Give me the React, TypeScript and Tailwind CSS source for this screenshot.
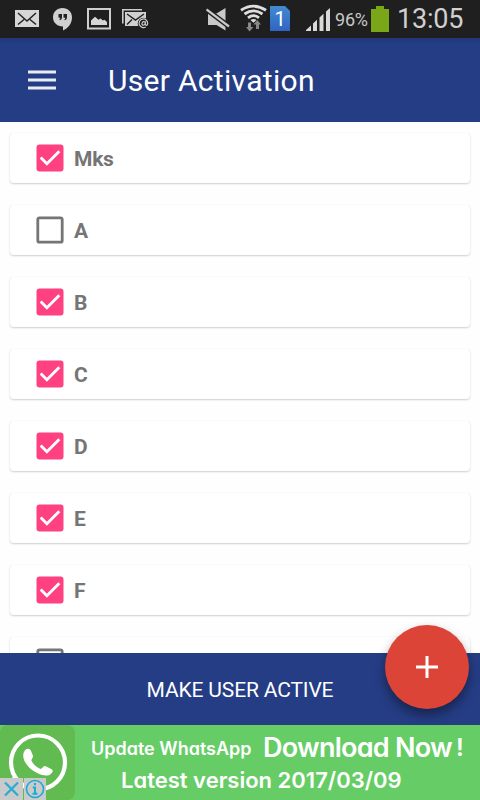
import React from "react";

const users = [
  { name: "Mks", active: true },
  { name: "A", active: false },
  { name: "B", active: true },
  { name: "C", active: true },
  { name: "D", active: true },
  { name: "E", active: true },
  { name: "F", active: true },
  { name: "", active: false },
];

function StatusBar() {
  return (
    <header className="flex h-[38px] shrink-0 items-center bg-[#1f1f1f] text-[#d4d4d4]">
      <svg className="ml-[15px] shrink-0" width="24" height="38" viewBox="0 0 24 38">
        <rect y="10" width="24" height="17" fill="#d6d6d6" />
        <path d="M3 13l9 8 9-8M3 24.5l6-5M21 24.5l-6-5" fill="none" stroke="#222" strokeWidth="1.5" />
      </svg>
      <svg className="ml-[14px] shrink-0" width="19" height="38" viewBox="0 0 19 38">
        <path d="M9.5 8C4 8 0 12 0 17.300C0 22.500 4 26.500 10 26.500V30.500C15 28.500 19 23.500 19 17.300C19 12 15 8 9.500 8Z" fill="#d0d0d0" />
        <path d="M5.500 14h3.500v3.500q0 2-2 2.800l-.700-.700q1-.6 1-1.900H5.500zM10.500 14H14v3.500q0 2-2 2.800l-.700-.700q1-.6 1-1.900h-1.800z" fill="#222" />
      </svg>
      <svg className="ml-[15px] shrink-0" width="24" height="38" viewBox="0 0 24 38">
        <rect x="1" y="9" width="22" height="19.500" fill="none" stroke="#cfcfcf" strokeWidth="2" />
        <path d="M4 25v-4.500l4-3.800 3.500 3 2-1.200 2.500 2 1.500-.8 2.500 2.300V25z" fill="#d6d6d6" />
      </svg>
      <svg className="ml-[11px] shrink-0" width="27" height="38" viewBox="0 0 27 38">
        <path d="M.8 23.500V9.800H20" fill="none" stroke="#ccc" strokeWidth="1.600" />
        <path d="M3 12h21v7l-6 7H3z" fill="#d0d0d0" />
        <path d="M5 14l8.500 6 8.500-6M5 24.500l5-5" fill="none" stroke="#222" strokeWidth="1.500" />
        <circle cx="21.500" cy="23.500" r="5.800" fill="#1f1f1f" />
        <path d="M23.700 26.900a4.300 4.300 0 1 1 2-3.600c0 2.600-2.600 2.600-2.400.3l.3-2.300m-.4 1.900c-.3 2.700-3.500 2.500-3.200.3s3-2.800 3.200-.3" fill="none" stroke="#ccc" strokeWidth="1.200" />
      </svg>
      <svg className="ml-[57px] shrink-0" width="24" height="38" viewBox="0 0 24 38">
        <path d="M2 13.500h8.500l9-5.500v22.500l-9-5.500H2z" fill="#c9c9c9" />
        <path d="M.500 9.500L23 26.500" stroke="#1f1f1f" strokeWidth="5" />
        <path d="M.500 9.500L23 26.500" stroke="#c9c9c9" strokeWidth="2.200" />
      </svg>
      <svg className="ml-[10px] shrink-0" width="27" height="38" viewBox="0 0 27 38">
        <g fill="none" stroke="#dedede" strokeWidth="2.800">
          <path d="M1 10.200Q13.500 2.200 26 10.200" />
          <path d="M4.500 14Q13.500 7.800 22.500 14" />
          <path d="M8 17.800Q13.500 13.500 19 17.800" />
        </g>
        <path d="M10.500 20q3-2 6 0l-3 2.700z" fill="#dedede" />
        <path d="M8 22.500h3V27h2.500L9.500 31.500 6 27h2zM16 29v-4.500h-2.500L17.300 20l3.700 4.500h-2V29z" fill="#888" />
      </svg>
      <div className="ml-[3px] mt-[-1px] flex h-[25px] w-[20px] shrink-0 items-center justify-center bg-gradient-to-b from-[#438bd1] to-[#3163c2] font-['Roboto',sans-serif] text-[20px] text-white [clip-path:polygon(0_0,75%_0,100%_20%,100%_100%,0_100%)]">1</div>
      <svg className="ml-[16px] shrink-0" width="24" height="38" viewBox="0 0 24 38">
        <path d="M0 31v-1l5-4.500V31zM7 31v-7.500l4-3.800V31zM13.500 31V17.500l4-3.800V31zM20 31V11.500L24 8v23z" fill="#d9d9d9" />
      </svg>
      <span className="ml-[5px] mt-[1px] w-[36px] shrink-0 font-['Roboto',sans-serif] text-[18px] tracking-[-0.2px] text-[#c8c8c8]">96%</span>
      <svg className="shrink-0" width="18" height="38" viewBox="0 0 18 38">
        <path d="M0 9h5V6h8v3h5v23H0z" fill="#7aa718" />
      </svg>
      <span className="ml-[8px] mt-[1px] shrink-0 font-['Roboto',sans-serif] text-[27px] leading-none tracking-[-0.2px] text-[#d0d0d0]">13:05</span>
    </header>
  );
}

function UserRow({ name, active }: { name: string; active: boolean }) {
  return (
    <label className="flex h-[50px] shrink-0 items-center rounded-[4px] bg-white pl-[26px] shadow-[0_1px_2px_rgba(0,0,0,0.19),0_0_1px_rgba(0,0,0,0.08)]">
      <svg width="28" height="28" viewBox="0 0 28 28">
        {active ? (
          <>
            <rect x=".5" y=".5" width="27" height="27" rx="3" fill="#ff4081" />
            <path d="M4.700 13.500l6.200 6.200L23.300 7.300" fill="none" stroke="#fff" strokeWidth="2.900" />
          </>
        ) : (
          <rect x="1.800" y="1.800" width="24.400" height="24.400" rx="1.800" fill="none" stroke="#757575" strokeWidth="2.800" />
        )}
      </svg>
      {name && (
        <span className="ml-[10px] mt-[2px] font-['Roboto',sans-serif] text-[21px] font-bold leading-none tracking-[-0.25px] text-[#757575]">{name}</span>
      )}
    </label>
  );
}

function AdBanner() {
  return (
    <footer className="relative flex h-[75px] shrink-0 overflow-hidden bg-[#66cd66] font-['Inter',sans-serif] font-semibold text-white [font-feature-settings:'cv11']">
      <div className="flex w-[75px] shrink-0 rounded-[8px] bg-[#61bb50]">
        <svg width="75" height="75" viewBox="0 0 75 75">
          <circle cx="38" cy="37.500" r="27" fill="none" stroke="#fff" strokeWidth="4.200" />
          <path d="M15 51l-4 14 13-4" fill="none" stroke="#fff" strokeWidth="4.200" strokeLinejoin="round" />
          <path d="M25.500 24.800c1.500-1.700 4.300-1.500 5.200.5l2.300 5.500c.6 1.600-2.100 3.700-1.500 5 2 3.700 5 6.400 8.500 8 1.800.8 3.300-3.400 5.200-2.700l6 2.800c3.200 1.800.9 4.500-1.700 6-4.800 2-12.500-1-18-5.300-6.300-5.200-11.400-13.800-6-19.800z" fill="#fff" />
        </svg>
      </div>
      <div className="flex flex-1 flex-col">
        <div className="mt-[6px] flex h-[32px] whitespace-nowrap pl-[16px]">
          <span className="w-[172px] text-[18px] leading-[36px]">Update WhatsApp</span>
          <span className="w-[193px] text-[27px] leading-[34px] tracking-[-0.75px]">Download Now</span>
          <span className="text-[24px] leading-[34px]">!</span>
        </div>
        <span className="mt-px pl-[46px] text-[22px] leading-[32px]">Latest version 2017/03/09</span>
      </div>
      <div className="absolute bottom-0 left-0 flex gap-px">
        <svg className="bg-[#cacaca]" width="23" height="22" viewBox="0 0 23 22">
          <path d="M5 4.500l13 13M18 4.500l-13 13" stroke="#26acd3" strokeWidth="2.200" />
        </svg>
        <svg className="bg-[#cacaca]" width="22" height="22" viewBox="0 0 22 22">
          <circle cx="11" cy="11" r="8.500" fill="none" stroke="#1cabd2" strokeWidth="1.600" />
          <path d="M11 5v2.300M8.800 9.500H11V15.500M8.500 15.700h5" fill="none" stroke="#1cabd2" strokeWidth="2" />
        </svg>
      </div>
    </footer>
  );
}

export default function App() {
  return (
    <div className="relative flex h-[800px] w-[480px] flex-col overflow-hidden bg-white">
      <StatusBar />
      <div className="flex h-[84px] shrink-0 items-center bg-[#253d85] bg-gradient-to-b from-[#21377a] to-[#253d85] to-[8%]">
        <svg className="ml-[28px]" width="28" height="22" viewBox="0 0 28 22">
          <path d="M0 3h28M0 11h28M0 19h28" stroke="#fff" strokeOpacity=".9" strokeWidth="3" />
        </svg>
        <h1 className="ml-[52px] mt-px font-['Roboto',sans-serif] text-[30px] font-normal leading-none tracking-[0.3px] text-white">User Activation</h1>
      </div>
      <main className="flex h-[531px] shrink-0 flex-col gap-[22px] overflow-hidden bg-[#fefefe] px-[10px] pt-[11px]">
        {users.map((user, index) => (
          <UserRow key={index} {...user} />
        ))}
      </main>
      <button className="flex h-[72px] shrink-0 items-center justify-center bg-[#253d85] pt-[3px] font-['Roboto',sans-serif] text-[21px] tracking-[-0.15px] text-white">MAKE USER ACTIVE</button>
      <AdBanner />
      <button aria-label="Add user" className="absolute left-[385px] top-[625px] flex size-[84px] items-center justify-center rounded-full bg-[#db4437] shadow-[0_6px_11px_rgba(0,0,0,0.42)]">
        <svg width="22" height="22" viewBox="0 0 22 22">
          <path d="M0 11h22M11 0v22" stroke="#fff" strokeWidth="3" />
        </svg>
      </button>
    </div>
  );
}
